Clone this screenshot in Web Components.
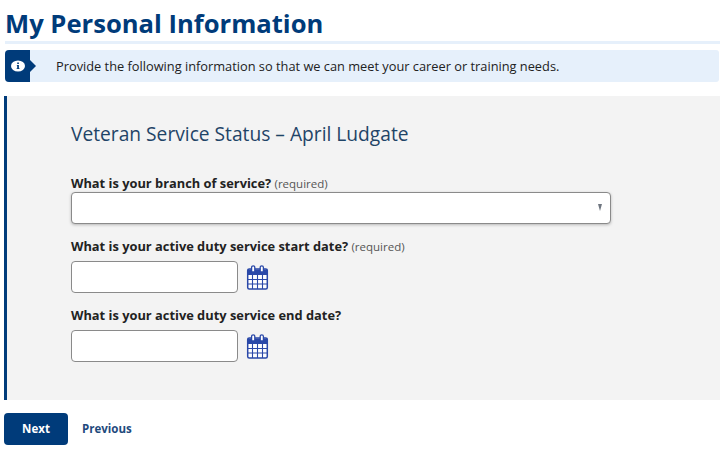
<!DOCTYPE html>
<html lang="en">
<head>
<meta charset="utf-8">
<title>My Personal Information</title>
<style>
    html, body { margin: 0; padding: 0; background: #fff; }
    body { font-family: "Open Sans", "Liberation Sans", sans-serif; color: #222; width: 727px; height: 453px; overflow: hidden; }
</style>
</head>
<body>
<page-heading>My Personal Information</page-heading>
<info-banner>Provide the following information so that we can meet your career or training needs.</info-banner>
<form-panel heading="Veteran Service Status – April Ludgate">
    <select-field label="What is your branch of service?" required></select-field>
    <date-field label="What is your active duty service start date?" required></date-field>
    <date-field class="last" label="What is your active duty service end date?"></date-field>
</form-panel>
<form-actions></form-actions>

<script>
class PageHeading extends HTMLElement {
    constructor() {
        super();
        this.attachShadow({ mode: 'open' });
        this.shadowRoot.innerHTML = `
            <style>
                :host { display: block; margin: 0 7px 0 5px; border-bottom: 3px solid #e6f0fb; height: 44px; box-sizing: border-box; }
                h1 { margin: 0; font-size: 25.6px; line-height: 41px; height: 41px; padding-top: 3px; box-sizing: border-box; font-weight: 700; color: #003b7a; white-space: nowrap; }
            </style>
            <h1><slot></slot></h1>
        `;
    }
}

class InfoBanner extends HTMLElement {
    constructor() {
        super();
        this.attachShadow({ mode: 'open' });
        this.shadowRoot.innerHTML = `
            <style>
                :host { display: flex; align-items: center; margin: 6px 8px 0 5px; height: 32px; background: #e6f0fb; border-radius: 3px; font-size: 12.8px; color: #222; }
                .flag { position: relative; flex: none; width: 25px; height: 32px; background: #003b7a; border-radius: 4px 0 0 4px; display: flex; align-items: center; justify-content: center; }
                .flag::after { content: ""; position: absolute; left: 25px; top: 10px; border-left: 6px solid #003b7a; border-top: 6px solid transparent; border-bottom: 6px solid transparent; }
                svg { display: block; width: 14px; height: 12px; }
                .text { margin-left: 26px; white-space: nowrap; }
            </style>
            <div class="flag">
                <svg viewBox="0 0 14 12"><ellipse cx="7" cy="6" rx="7" ry="5.6" fill="#fff"/><path d="M5.9 5h2v3.2h.6v.9H5.6v-.9h.6V5.9h-.3zM6.2 2.6h1.7v1.5H6.2z" fill="#003b7a"/></svg>
            </div>
            <div class="text"><slot></slot></div>
        `;
    }
}

class FormPanel extends HTMLElement {
    constructor() {
        super();
        this.attachShadow({ mode: 'open' });
    }

    connectedCallback() {
        this.shadowRoot.innerHTML = `
            <style>
                :host { display: block; margin: 14px 7px 0 4px; height: 304px; box-sizing: border-box; background: #f3f3f3; border-left: 3px solid #003b7a; padding: 24px 0 0 64px; }
                h2 { margin: 0 0 26px 0; font-size: 19.2px; line-height: 28px; font-weight: 400; color: #1f4467; white-space: nowrap; }
                .fields { display: flex; flex-direction: column; gap: 13px; }
            </style>
            <h2>${this.getAttribute('heading')}</h2>
            <div class="fields"><slot></slot></div>
        `;
    }
}

const fieldLabelStyle = `
    .label { font-size: 12.85px; line-height: 18px; font-weight: 700; color: #222; white-space: nowrap; }
    .req { font-size: 11.5px; font-weight: 400; color: #555; }
`;

function labelMarkup(el) {
    const req = el.hasAttribute('required') ? ' <span class="req">(required)</span>' : '';
    return `<div class="label">${el.getAttribute('label')}${req}</div>`;
}

class SelectField extends HTMLElement {
    constructor() {
        super();
        this.attachShadow({ mode: 'open' });
    }

    connectedCallback() {
        this.shadowRoot.innerHTML = `
            <style>
                :host { display: block; }
                ${fieldLabelStyle}
                .box { position: relative; width: 540px; height: 32px; margin-top: -1px; box-sizing: border-box; background: #fff; border: 1px solid #8a8a8a; border-radius: 4px; box-shadow: 0 1px 3px rgba(0,0,0,.25); }
                .box::after { content: ""; position: absolute; right: 8px; top: 11px; border-top: 7px solid #6f7680; border-left: 2.5px solid transparent; border-right: 2.5px solid transparent; }
            </style>
            ${labelMarkup(this)}
            <div class="box"></div>
        `;
    }
}

class DateField extends HTMLElement {
    constructor() {
        super();
        this.attachShadow({ mode: 'open' });
    }

    connectedCallback() {
        // the end date field has no (required) note, and sits one pixel lower
        const below = this.classList.contains('last') ? 6 : 5;
        this.shadowRoot.innerHTML = `
            <style>
                :host { display: block; }
                ${fieldLabelStyle}
                .label { margin-bottom: ${below}px; }
                .row { display: flex; align-items: center; gap: 8px; }
                .box { width: 167px; height: 32px; box-sizing: border-box; background: #fff; border: 1px solid #8a8a8a; border-radius: 4px; }
                svg { display: block; width: 23px; height: 25px; }
            </style>
            ${labelMarkup(this)}
            <div class="row">
                <div class="box"></div>
                <svg viewBox="0 0 23 25" fill="none">
                    <rect x="1.7" y="4" width="19.6" height="20" rx="1.5" fill="#fff" stroke="#2a48a8" stroke-width="1.5"/>
                    <path d="M1.5 4.5h20V10h-20z" fill="#2a48a8"/>
                    <path d="M5.6 7V2.4a1.6 1.6 0 0 1 3.2 0V7zM14.2 7V2.4a1.6 1.6 0 0 1 3.2 0V7z" fill="#fff" stroke="#2a48a8" stroke-width="1.3"/>
                    <path d="M1.5 14.5h20M1.5 19h20M6.5 10v14M11.5 10v14M16.5 10v14" stroke="#2a48a8" stroke-width="1.1"/>
                </svg>
            </div>
        `;
    }
}

class FormActions extends HTMLElement {
    constructor() {
        super();
        this.attachShadow({ mode: 'open' });
        this.shadowRoot.innerHTML = `
            <style>
                :host { display: flex; align-items: center; gap: 14px; margin: 13px 0 0 4px; font-size: 11.5px; line-height: 30px; font-weight: 700; }
                .next { width: 64px; height: 32px; display: flex; align-items: center; justify-content: center; background: #003b7a; color: #fff; border-radius: 4px; }
                .prev { color: #1f4a7d; }
            </style>
            <div class="next">Next</div>
            <div class="prev">Previous</div>
        `;
    }
}

customElements.define('page-heading', PageHeading);
customElements.define('info-banner', InfoBanner);
customElements.define('form-panel', FormPanel);
customElements.define('select-field', SelectField);
customElements.define('date-field', DateField);
customElements.define('form-actions', FormActions);
</script>
</body>
</html>
